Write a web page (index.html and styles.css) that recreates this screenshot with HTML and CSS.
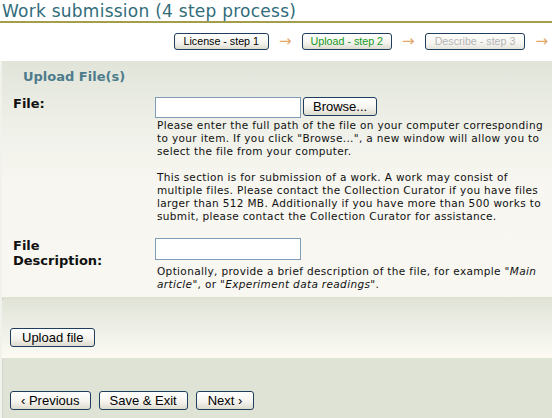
FILE: index.html
```html
<!DOCTYPE html>
<html>
<head>
<meta charset="utf-8">
<title>Work submission</title>
<link rel="stylesheet" href="styles.css">
</head>
<body>
<h1 class="title">Work submission (4 step process)</h1>
<div class="steps">
  <button class="step">License - step 1</button><span class="arrow">→</span>
  <button class="step current">Upload - step 2</button><span class="arrow">→</span>
  <button class="step future">Describe - step 3</button><span class="arrow">→</span>
</div>
<div class="panel">
  <div class="form">
    <h2 class="section-title">Upload File(s)</h2>
    <div class="field file-field">
      <label class="label">File:</label>
      <div class="control">
        <div class="input-line"><input class="text-input" type="text"><button class="btn browse">Browse...</button></div>
        <div class="help first-help">
          <p>Please enter the full path of the file on your computer corresponding<br>to your item. If you click "Browse...", a new window will allow you to<br>select the file from your computer.</p>
          <p>This section is for submission of a work. A work may consist of<br>multiple files. Please contact the Collection Curator if you have files<br>larger than 512 MB. Additionally if you have more than 500 works to<br>submit, please contact the Collection Curator for assistance.</p>
        </div>
      </div>
    </div>
    <div class="field desc-field">
      <label class="label">File<br>Description:</label>
      <div class="control">
        <div class="input-line"><input class="text-input" type="text"></div>
        <div class="help second-help">
          <p>Optionally, provide a brief description of the file, for example "<em>Main</em><br><em>article</em>", or "<em>Experiment data readings</em>".</p>
        </div>
      </div>
    </div>
  </div>
  <div class="upload-row"><button class="btn wide">Upload file</button></div>
  <div class="nav">
    <button class="btn nav-btn">‹ Previous</button>
    <button class="btn nav-btn">Save &amp; Exit</button>
    <button class="btn nav-btn next">Next ›</button>
  </div>
</div>
</body>
</html>
```

FILE: styles.css
```css
html, body {
  margin: 0;
  padding: 0;
  background: #ffffff;
}

body {
  width: 552px;
  height: 418px;
  overflow: hidden;
  font-family: "DejaVu Sans", Verdana, sans-serif;
}

.title {
  margin: 0;
  padding: 1px 0 0 2px;
  height: 20px;
  font-size: 17px;
  line-height: 20px;
  letter-spacing: 0.25px;
  font-weight: normal;
  color: #316c7b;
  border-bottom: 2px solid #a39d4c;
}

.steps {
  display: flex;
  justify-content: flex-end;
  align-items: center;
  gap: 10px;
  padding: 10px 4px 0 0;
  height: 17px;
}

.step {
  height: 17px;
  padding: 0 9px;
  margin: 0;
  font-family: "Liberation Sans", Arial, sans-serif;
  font-size: 10.7px;
  line-height: 15px;
  color: #000;
  border: 1px solid #1f3d5c;
  border-radius: 3px;
  background: linear-gradient(#ffffff, #f4f3ee 60%, #dedbcf);
}

.step.current {
  color: #13981a;
  padding: 0 8px;
}

.step.future {
  color: #b4b4b4;
  padding: 0 9px;
  background: linear-gradient(#ffffff, #f6f5f1 60%, #e6e4dc);
}

.arrow {
  font-family: "DejaVu Sans", sans-serif;
  font-size: 15px;
  line-height: 17px;
  color: #e3a767;
}

.panel {
  margin-top: 11px;
  height: 357px;
  background: #dfe3d5;
  border-left: 2px solid #f2f2ec;
  box-shadow: inset 1px 0 0 #d2d5c8;
}

.form {
  padding: 8px 0 6px 0;
  background: linear-gradient(#e1e4d9 0px, #eef0e8 60px, #f7f6f0 120px, #f8f7f1 100%);
}

.section-title {
  margin: 0 0 12px 21px;
  font-size: 13px;
  line-height: 16px;
  font-weight: bold;
  color: #4d7c8c;
}

.field {
  display: grid;
  grid-template-columns: 142px 1fr;
  padding-left: 11px;
}

.desc-field {
  margin-top: 15px;
}

.label {
  margin-top: -1px;
  font-size: 13px;
  line-height: 15px;
  font-weight: bold;
  color: #111;
  width: 110px;
}

.desc-field .label {
  margin-top: 0;
}

.input-line {
  display: flex;
  align-items: flex-start;
  gap: 2px;
}

.text-input {
  box-sizing: border-box;
  width: 146px;
  height: 21px;
  margin: 0;
  padding: 0 2px;
  border: 1px solid #7f9db9;
  background: #fff;
}

.desc-field .text-input {
  height: 22px;
}

.btn {
  box-sizing: border-box;
  height: 19px;
  margin: 0;
  padding: 0 9px;
  font-family: "Liberation Sans", Arial, sans-serif;
  font-size: 13px;
  line-height: 17px;
  color: #000;
  border: 1px solid #1f3d5c;
  border-radius: 3px;
  background: linear-gradient(#ffffff, #f5f4ef 55%, #dedbcf);
}

.btn.wide {
  padding: 0 11px;
}

.btn.nav-btn {
  padding: 0 10px;
}

.btn.nav-btn.next {
  padding: 0 11px;
}

.help {
  padding-left: 2px;
  font-size: 10.5px;
  line-height: 13px;
  letter-spacing: 0.35px;
  color: #111;
  white-space: nowrap;
}

.first-help {
  margin-top: 1px;
}

.second-help {
  margin-top: 5px;
}

.help p {
  margin: 0 0 13px 0;
}

.help p:last-child {
  margin-bottom: 0;
}

.help em {
  font-style: italic;
}

.upload-row {
  margin-top: 3px;
  height: 58px;
  box-sizing: border-box;
  padding: 27px 0 0 8px;
  background: linear-gradient(#e1e4d7, #eef0e8 50%, #fbf9f2 95%, #fdfaf3);
}

.nav {
  display: flex;
  gap: 8px;
  padding: 33px 0 0 8px;
}
```
